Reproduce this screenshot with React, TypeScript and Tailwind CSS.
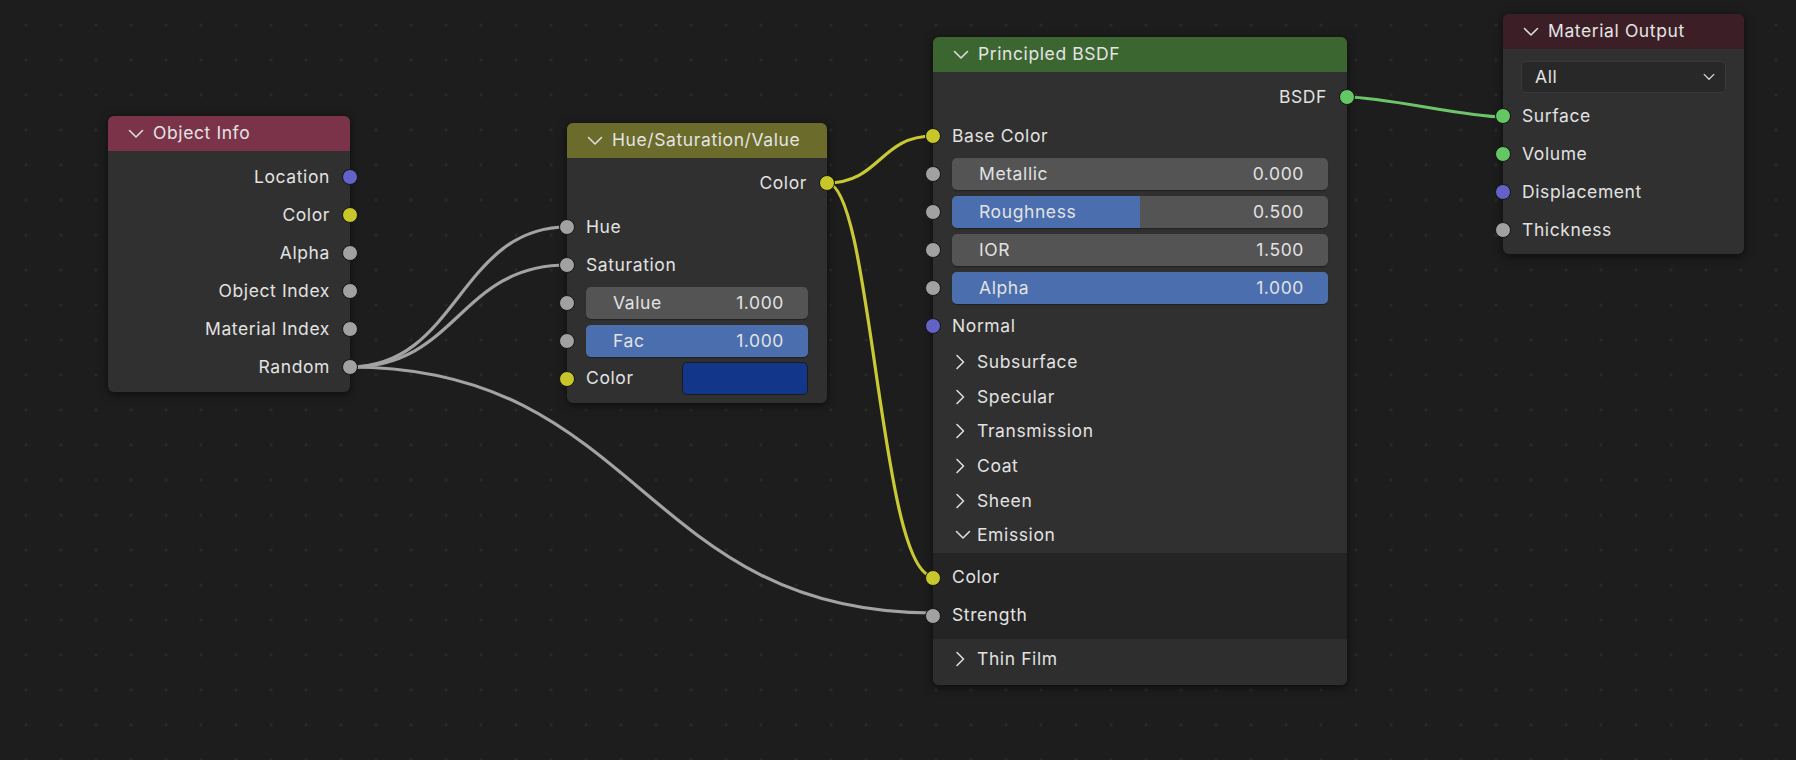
import type { ReactNode } from 'react';

const SOCKET = {
  gray: 'bg-[#a1a1a1]',
  yellow: 'bg-[#c7c729]',
  purple: 'bg-[#6363c7]',
  green: 'bg-[#63c763]',
};

type SocketColor = keyof typeof SOCKET;

function Socket({ color, side }: { color: SocketColor; side: 'in' | 'out' }) {
  return (
    <span
      className={`absolute top-1/2 -translate-y-1/2 w-[16px] h-[16px] rounded-full border-[1.5px] border-[#141414] ${SOCKET[color]} ${
        side === 'in' ? '-left-[8px]' : '-right-[8px]'
      }`}
    />
  );
}

function ChevronDown({ className = '' }: { className?: string }) {
  return (
    <svg width="16" height="10" viewBox="0 0 16 10" className={className}>
      <polyline points="1.5,1.5 8,8 14.5,1.5" fill="none" stroke="#dcdcdc" strokeWidth="1.6" strokeLinecap="round" strokeLinejoin="round" />
    </svg>
  );
}

function ChevronRight() {
  return (
    <svg width="10" height="16" viewBox="0 0 10 16">
      <polyline points="2,1.5 8.5,8 2,14.5" fill="none" stroke="#dcdcdc" strokeWidth="1.6" strokeLinecap="round" strokeLinejoin="round" />
    </svg>
  );
}

function Node({
  title,
  headerClass,
  className,
  children,
}: {
  title: string;
  headerClass: string;
  className: string;
  children: ReactNode;
}) {
  return (
    <div className={`absolute rounded-[6px] bg-[#303030] shadow-[0_2px_10px_rgba(0,0,0,0.6)] ${className}`}>
      <div className={`h-[35px] flex items-center pl-[20px] rounded-t-[6px] text-[#e4e4e4] ${headerClass}`}>
        <ChevronDown />
        <span className="ml-[9px]">{title}</span>
      </div>
      {children}
    </div>
  );
}

function Output({ label, color }: { label: string; color: SocketColor }) {
  return (
    <div className="relative h-[38px] flex items-center justify-end pr-[20px]">
      {label}
      <Socket color={color} side="out" />
    </div>
  );
}

function Input({ label, color }: { label: string; color: SocketColor }) {
  return (
    <div className="relative h-[38px] flex items-center pl-[19px]">
      {label}
      <Socket color={color} side="in" />
    </div>
  );
}

function Slider({ label, value, fill }: { label: string; value: string; fill: number }) {
  return (
    <div className="relative h-[38px] flex items-center px-[19px]">
      <Socket color="gray" side="in" />
      <div className="relative flex-1 h-[32px] rounded-[5px] bg-[#545454] overflow-hidden shadow-[0_1px_1px_rgba(0,0,0,0.35)]">
        <div className="absolute inset-y-0 left-0 bg-[#4a6eae]" style={{ width: `${fill * 100}%` }} />
        <div className="relative h-full flex items-center justify-between pl-[27px] pr-[24px]">
          <span>{label}</span>
          <span>{value}</span>
        </div>
      </div>
    </div>
  );
}

function Panel({ label, open = false }: { label: string; open?: boolean }) {
  return (
    <div className="h-[34.6px] flex items-center pl-[22px]">
      <span className="w-[22px] flex justify-start">{open ? <ChevronDown /> : <ChevronRight />}</span>
      <span>{label}</span>
    </div>
  );
}

const links = [
  { d: 'M350,367 C458,367 459,227 567,227', c: '#a3a3a3' },
  { d: 'M350,367 C458,367 459,265 567,265', c: '#a3a3a3' },
  { d: 'M350,367 C641,367 642,613 933,613', c: '#a3a3a3' },
  { d: 'M827,183 C880,183 880,136 933,136', c: '#c9c935' },
  { d: 'M827,183 C872,183 880,576 933,576', c: '#c9c935' },
  { d: 'M1347,97 C1385,97 1465,117 1503,117', c: '#6ec46a' },
];

export default function App() {
  return (
    <div
      className="relative w-[1796px] h-[760px] overflow-hidden bg-[#1d1d1d] bg-[radial-gradient(circle,#2c2c2c_1px,transparent_1.7px)] bg-[length:35px_35px] bg-[position:8.5px_7.5px] text-[17.5px] tracking-[0.6px] text-[#e2e2e2] font-['Inter','Noto_Sans',sans-serif]"
    >
      <svg className="absolute inset-0" width="1796" height="760">
        {links.map((l, i) => (
          <path key={i} d={l.d} fill="none" stroke={l.c} strokeWidth="3.2" strokeLinecap="round" />
        ))}
      </svg>

      {/* Object Info */}
      <Node title="Object Info" headerClass="bg-[#7a3349]" className="left-[108px] top-[116px] w-[242px]">
        <div className="pt-[7px] pb-[6px]">
          <Output label="Location" color="purple" />
          <Output label="Color" color="yellow" />
          <Output label="Alpha" color="gray" />
          <Output label="Object Index" color="gray" />
          <Output label="Material Index" color="gray" />
          <Output label="Random" color="gray" />
        </div>
      </Node>

      {/* Hue/Saturation/Value */}
      <Node title="Hue/Saturation/Value" headerClass="bg-[#6b6b2b]" className="left-[567px] top-[123px] w-[260px]">
        <div className="pt-[6px] pb-[6px]">
          <Output label="Color" color="yellow" />
          <div className="h-[6px]" />
          <Input label="Hue" color="gray" />
          <Input label="Saturation" color="gray" />
          <Slider label="Value" value="1.000" fill={0} />
          <Slider label="Fac" value="1.000" fill={1} />
          <div className="relative h-[37px] flex items-center pl-[19px] pr-[19px]">
            <Socket color="yellow" side="in" />
            <span className="flex-1">Color</span>
            <div className="w-[126px] h-[33px] rounded-[5px] bg-[#12368a] border border-[#1b1b1b]" />
          </div>
        </div>
      </Node>

      {/* Principled BSDF */}
      <Node title="Principled BSDF" headerClass="bg-[#3c6630]" className="left-[933px] top-[37px] w-[414px]">
        <div className="pt-[6px]">
          <Output label="BSDF" color="green" />
          <div className="h-[1px]" />
          <Input label="Base Color" color="yellow" />
          <Slider label="Metallic" value="0.000" fill={0} />
          <Slider label="Roughness" value="0.500" fill={0.5} />
          <Slider label="IOR" value="1.500" fill={0} />
          <Slider label="Alpha" value="1.000" fill={1} />
          <Input label="Normal" color="purple" />
          <Panel label="Subsurface" />
          <Panel label="Specular" />
          <Panel label="Transmission" />
          <Panel label="Coat" />
          <Panel label="Sheen" />
          <Panel label="Emission" open />
        </div>
        <div className="bg-[#242424] pt-[6px] pb-[4px]">
          <Input label="Color" color="yellow" />
          <Input label="Strength" color="gray" />
        </div>
        <div className="pt-[3px] pb-[9px] rounded-b-[6px] bg-[#2e2e2e]">
          <Panel label="Thin Film" />
        </div>
      </Node>

      {/* Material Output */}
      <Node title="Material Output" headerClass="bg-[#3c1f26]" className="left-[1503px] top-[14px] w-[241px]">
        <div className="pt-[12px] pb-[5px]">
          <div className="mx-[18px] h-[32px] rounded-[5px] bg-[#282828] border border-[#3a3a3a] flex items-center justify-between pl-[13px] pr-[8px]">
            <span>All</span>
            <ChevronDown className="scale-75" />
          </div>
          <div className="h-[4px]" />
          <Input label="Surface" color="green" />
          <Input label="Volume" color="green" />
          <Input label="Displacement" color="purple" />
          <Input label="Thickness" color="gray" />
        </div>
      </Node>
    </div>
  );
}
